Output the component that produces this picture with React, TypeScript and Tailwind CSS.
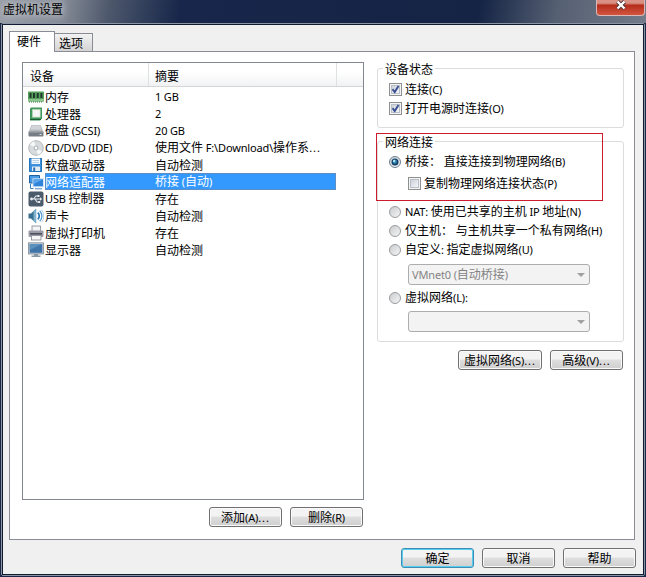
import type { ReactNode } from 'react'

interface Device {
  name: string
  summary: string
  icon: ReactNode
}

const svg = (children: ReactNode) => (
  <svg viewBox="0 0 16 16" className="h-4 w-4 shrink-0">
    {children}
  </svg>
)

const icons = {
  memory: svg(
    <>
      <rect x="0" y="2.5" width="16" height="10" rx="0.5" fill="#56a05c" />
      <rect x="0" y="10" width="16" height="2.5" fill="#8cc48e" />
      <path d="M1.5 4h2v5h-2zM5 4h2v5H5zM8.7 4h2v5h-2zM12.4 4h2v5h-2z" fill="#1f3a2c" />
      <path d="M1 13h14" stroke="#3b7a44" strokeDasharray="1 1" />
    </>,
  ),
  cpu: svg(
    <>
      <path d="M3 1.5h11v11L12 14.5H2v-12z" fill="#3f9558" />
      <path d="M2 13.5h11" stroke="#1d5c32" />
      <rect x="4.3" y="3.3" width="7.9" height="7.9" fill="#f4f6f3" stroke="#a9d1b0" strokeWidth="0.7" />
    </>,
  ),
  disk: svg(
    <>
      <path d="M3.5 2h9L15.5 9h-15z" fill="#b7bbc0" />
      <path d="M4 2.5h8l1.4 4H2.6z" fill="#d3d6d9" />
      <rect x="0.5" y="8.5" width="15" height="5" rx="0.8" fill="#777d84" />
      <path d="M1 9h14" stroke="#a3a9af" />
      <path d="M11.5 11.5h2" stroke="#d8dde0" />
    </>,
  ),
  cd: svg(
    <>
      <circle cx="8" cy="8" r="7.3" fill="#d9dcdf" stroke="#a3a9af" strokeWidth="0.8" />
      <path d="M8 8 2 4.5A7 7 0 0 1 6 1.3zM8 8l6 3.5a7 7 0 0 1-4 3.2z" fill="#f7f8f8" />
      <circle cx="8" cy="8" r="2.5" fill="#b7bcc1" />
      <circle cx="8" cy="8" r="1.2" fill="#fff" />
    </>,
  ),
  floppy: svg(
    <>
      <path d="M1 1h13v14H1z" fill="#3b8fdb" />
      <path d="M1.5 1.5h12v13h-12z" fill="none" stroke="#2473bd" />
      <rect x="3.5" y="1.5" width="8.5" height="5.5" fill="#f3f8fc" />
      <path d="M4.5 3.5h6.5M4.5 5.5h6.5" stroke="#9dbfdc" strokeWidth="0.7" />
      <rect x="4" y="9.5" width="8" height="4.5" fill="#e4ebf2" />
      <rect x="5.2" y="10.5" width="2" height="3.5" fill="#2c6eb0" />
    </>,
  ),
  network: svg(
    <>
      <path d="M1.5 1.5h10v7.5h-10z" fill="#4a9be6" stroke="#1f5f9f" />
      <path d="M2.5 10v4.5h3" stroke="#3d7fbd" fill="none" />
      <rect x="5" y="4.8" width="10.5" height="8" fill="#2f84da" stroke="#cfe5f8" />
      <path d="M5.7 5.5h9.2L5.7 10z" fill="#5aa6ec" />
      <path d="M7 14.8h7" stroke="#4f86ba" />
    </>,
  ),
  usb: svg(
    <>
      <rect x="0.5" y="0.5" width="15" height="15" rx="2" fill="#4c5b6b" />
      <path d="M3 8h9M5.5 8 8 5h2M7 8l2 3h2" stroke="#e8edf1" strokeWidth="1.1" fill="none" />
      <circle cx="3.5" cy="8" r="1.4" fill="#e8edf1" />
      <path d="M12 6.2 14.2 8 12 9.8zM9.5 4h2v2h-2zM10.2 10h2v2h-2z" fill="#e8edf1" />
    </>,
  ),
  sound: svg(
    <>
      <path d="M0.5 5.5H3L8 0.8v14.4L3 10.5H0.5z" fill="#39708f" />
      <path d="M5.5 3.2 8.3 0.8v14.4L5.5 12.8z" fill="#7fb3cf" />
      <path d="M9.8 4.7a4.5 4.5 0 0 1 0 6.6" stroke="#2273b5" strokeWidth="1.7" fill="none" />
      <path d="M11.7 2.7a7.5 7.5 0 0 1 0 10.6" stroke="#5fa3d6" strokeWidth="1.4" fill="none" />
      <path d="M13.6 1.8a10 10 0 0 1 0 12.4" stroke="#b5d5ec" fill="none" />
    </>,
  ),
  printer: svg(
    <>
      <rect x="4" y="1" width="8.5" height="5.5" fill="#f5f5f7" stroke="#8f939c" strokeWidth="0.9" />
      <rect x="0.5" y="5.5" width="15" height="6.5" rx="1" fill="#9a9ca8" />
      <rect x="2" y="8" width="12" height="1.6" fill="#4e505c" />
      <rect x="3.5" y="10.5" width="9.5" height="4.5" fill="#f7f7f9" stroke="#8f939c" strokeWidth="0.9" />
    </>,
  ),
  display: svg(
    <>
      <rect x="0.5" y="0.8" width="15" height="11.2" fill="#c3cdd6" stroke="#7e8b97" strokeWidth="0.8" />
      <rect x="1.7" y="2" width="12.6" height="8.8" fill="#3f75a8" />
      <path d="M1.7 2h12.6L1.7 8z" fill="#5c90bd" />
      <path d="M6 12h4v1.5H6zM3.5 13.5h9V15h-9z" fill="#8998a5" />
    </>,
  ),
}

const devices: Device[] = [
  { name: '内存', summary: '1 GB', icon: icons.memory },
  { name: '处理器', summary: '2', icon: icons.cpu },
  { name: '硬盘 (SCSI)', summary: '20 GB', icon: icons.disk },
  { name: 'CD/DVD (IDE)', summary: '使用文件 F:\\Download\\操作系...', icon: icons.cd },
  { name: '软盘驱动器', summary: '自动检测', icon: icons.floppy },
  { name: '网络适配器', summary: '桥接 (自动)', icon: icons.network },
  { name: 'USB 控制器', summary: '存在', icon: icons.usb },
  { name: '声卡', summary: '自动检测', icon: icons.sound },
  { name: '虚拟打印机', summary: '存在', icon: icons.printer },
  { name: '显示器', summary: '自动检测', icon: icons.display },
]

const SELECTED = 5

// Latin runs are set a little smaller and tighter than the Chinese text
function Text({ children }: { children: string }) {
  return (
    <span className="whitespace-pre">
      {children.split(/(\.{3}|[\x20-\x2d\x2f-\x7e]+)/).map((part, i) =>
        i % 2 ? (
          <span
            key={i}
            className={`font-['Noto_Sans',sans-serif] text-[11px] ${
              part === '...' ? 'tracking-[1px]' : 'tracking-[-0.15px]'
            }`}
          >
            {part}
          </span>
        ) : (
          part
        ),
      )}
    </span>
  )
}

function Button({ label, width, primary }: { label: string; width: string; primary?: boolean }) {
  return (
    <button
      className={`flex h-5 items-center justify-center rounded-[3px] border bg-linear-to-b from-[#f3f3f3] from-45% via-[#dedede] via-50% to-[#cfcfcf] ${width} ${
        primary
          ? 'border-[#3c8fb4] shadow-[inset_0_0_0_1px_#58cdf0]'
          : 'border-[#707070] shadow-[inset_0_0_0_1px_#fafafa]'
      }`}
    >
      <Text>{label}</Text>
    </button>
  )
}

function Checkbox({ label, checked }: { label: string; checked?: boolean }) {
  return (
    <label className="flex h-[19px] items-center gap-[3px]">
      <span className="flex h-[13px] w-[13px] items-center justify-center border border-[#8e8f8f] bg-[#f4f4f4]">
        <span className="flex h-[9px] w-[9px] items-center justify-center border border-[#b8bfc8] bg-linear-to-br from-[#cdd2d9] to-[#f4f5f7]">
          {checked && (
            <svg viewBox="0 0 9 9" className="h-[9px] w-[9px] shrink-0">
              <path d="M1.5 4.2 3.7 7 7.5 1" fill="none" stroke="#3a4f93" strokeWidth="1.9" />
            </svg>
          )}
        </span>
      </span>
      <Text>{label}</Text>
    </label>
  )
}

function Radio({ label, checked }: { label: string; checked?: boolean }) {
  return (
    <label className="flex h-[19px] items-center gap-1">
      <span
        className={`flex h-3 w-3 items-center justify-center rounded-full border bg-linear-to-br from-[#c9cccf] to-[#f5f5f5] ${
          checked ? 'border-[#6b8190]' : 'border-[#999b9c]'
        }`}
      >
        {checked && (
          <svg viewBox="0 0 8 8" className="h-2 w-2 shrink-0">
            <circle cx="4" cy="4" r="3.5" fill="#123f66" />
            <circle cx="3.8" cy="3.8" r="2.2" fill="#2d7fae" />
            <circle cx="3.2" cy="3" r="1.2" fill="#b4e4f7" />
          </svg>
        )}
      </span>
      <Text>{label}</Text>
    </label>
  )
}

function Select({ value }: { value: string }) {
  return (
    <div className="ml-[19px] flex h-[21px] w-[182px] items-center justify-between rounded-[3px] border border-[#adadad] bg-[#f3f3f3] pr-1 pl-[3px] text-[#838383]">
      <Text>{value}</Text>
      <span className="h-0 w-0 border-x-4 border-t-4 border-x-transparent border-t-[#a0a0a0]" />
    </div>
  )
}

function Group({ title, className, children }: { title: string; className: string; children: ReactNode }) {
  return (
    <section className={`rounded-[3px] border border-[#dcdcdc] pl-[11px] ${className}`}>
      <h2 className="-mt-2 -ml-[6px] h-4 w-fit bg-white px-0.5 leading-4">{title}</h2>
      {children}
    </section>
  )
}

export default function App() {
  return (
    <div className="flex h-[577px] w-[646px] flex-col overflow-hidden bg-[#1b2947] font-['Noto_Sans_CJK_SC',sans-serif] text-[12px] leading-4 text-black">
      {/* Title bar */}
      <header className="flex h-[23px] shrink-0 items-start justify-between bg-[linear-gradient(100deg,#9a9fa8_0%,#858b96_10%,#4d586c_17%,#17264a_28%,#152445_74%,#566073_86%,#737b89_100%)] pr-px pl-[3px]">
        <h1 className="pt-px [text-shadow:0_0_6px_#c9ccd2,0_0_8px_#c9ccd2]">虚拟机设置</h1>
        <div className="flex h-4 w-[49px] items-start justify-center rounded-b-[4px] border border-t-0 border-[#dcb9b7] bg-linear-to-b from-[#d99186] from-20% via-[#b52c1b] via-35% to-[#d2553f]">
          <svg viewBox="0 0 12 10" className="h-[10px] w-3">
            <path d="M2.5 1.5 9.5 8.5M9.5 1.5 2.5 8.5" stroke="#4b3438" strokeWidth="4" />
            <path d="M2.5 1.5 9.5 8.5M9.5 1.5 2.5 8.5" stroke="#fff" strokeWidth="2.4" />
          </svg>
        </div>
      </header>

      <main className="mx-px mb-px flex min-h-0 flex-1 flex-col rounded-[2px] border border-[#8b94a4]">
        <div className="flex min-h-0 flex-1 flex-col border border-[#111b30] bg-[#f0f0f0] pt-[6px] pr-[8px] pl-[6px]">
          {/* Tabs */}
          <nav className="flex h-5 shrink-0 items-end">
            <div className="z-10 -mb-px h-[21px] w-[46px] border border-b-0 border-[#898c95] bg-white pl-[7px] leading-[18px]">
              硬件
            </div>
            <div className="h-[18px] w-[38px] border border-b-0 border-l-0 border-[#898c95] bg-linear-to-b from-[#f2f2f2] to-[#d4d4d4] pl-[4px] leading-[18px]">
              选项
            </div>
          </nav>

          <div className="flex h-[489px] shrink-0 border border-[#898c95] bg-white pt-[10px] pl-[12px]">
            {/* Device list */}
            <div className="w-[342px]">
              <div className="h-[438px] border border-[#828790]">
                <div className="flex h-6 items-center border-b border-[#d5d5d5] bg-linear-to-b from-white from-40% to-[#f1f2f4] pr-px">
                  <span className="h-full w-[126px] border-r border-[#dfe0e2] pl-[7px] leading-[26px]">设备</span>
                  <span className="h-full w-[188px] border-r border-[#dfe0e2] pl-[6px] leading-[26px]">摘要</span>
                </div>
                <ul className="pt-px">
                  {devices.map((d, i) => (
                    <li key={d.name} className="flex h-[17px] w-[313px] items-center pl-[5px]">
                      {d.icon}
                      <div
                        className={`ml-px flex h-full flex-1 items-center ${
                          i === SELECTED ? 'bg-[#3399ff] text-white outline-1 -outline-offset-1 outline-[#5c8dc4]' : ''
                        }`}
                      >
                        <span className="w-[110px]">
                          <Text>{d.name}</Text>
                        </span>
                        <Text>{d.summary}</Text>
                      </div>
                    </li>
                  ))}
                </ul>
              </div>
              <div className="mt-[7px] flex justify-end gap-2 pr-px">
                <Button label="添加(A)..." width="w-[73px]" />
                <Button label="删除(R)" width="w-[73px]" />
              </div>
            </div>

            {/* Connection settings */}
            <div className="relative ml-[13px] w-[247px] pt-[6px]">
              <Group title="设备状态" className="h-[60px]">
                <div className="pt-[3px]">
                  <Checkbox label="连接(C)" checked />
                  <Checkbox label="打开电源时连接(O)" checked />
                </div>
              </Group>

              <Group title="网络连接" className="mt-[13px] h-[201px]">
                <div className="pt-[2px]">
                  <Radio label="桥接： 直接连接到物理网络(B)" checked />
                </div>
                <div className="pt-[3px] pl-[19px]">
                  <Checkbox label="复制物理网络连接状态(P)" />
                </div>
                <div className="pt-[9px]">
                  <Radio label="NAT: 使用已共享的主机 IP 地址(N)" />
                  <Radio label="仅主机： 与主机共享一个私有网络(H)" />
                  <Radio label="自定义: 指定虚拟网络(U)" />
                </div>
                <div className="pt-[5px]">
                  <Select value="VMnet0 (自动桥接)" />
                </div>
                <div className="pt-[3px] pb-[4px]">
                  <Radio label="虚拟网络(L):" />
                </div>
                <Select value="" />
              </Group>

              <div className="mt-2 flex justify-end gap-2 pr-px">
                <Button label="虚拟网络(S)..." width="w-[84px]" />
                <Button label="高级(V)..." width="w-[73px]" />
              </div>

              {/* Highlight around the bridged option */}
              <div className="absolute top-[71px] -left-px h-[68px] w-[227px] border border-[#cc1a2e]" />
            </div>
          </div>

          <footer className="mt-[8px] -mr-[1px] flex justify-end gap-2">
            <Button label="确定" width="w-[73px]" primary />
            <Button label="取消" width="w-[73px]" />
            <Button label="帮助" width="w-[73px]" />
          </footer>
        </div>
      </main>
    </div>
  )
}
